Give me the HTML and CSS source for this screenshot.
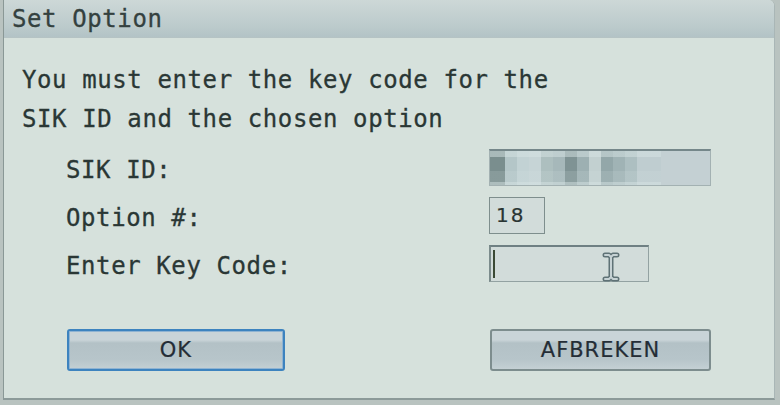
FILE: index.html
```html
<!DOCTYPE HTML>
<html>

<head>
  <meta charset="utf-8">
  <link rel="stylesheet" href="styles.css">
</head>

<body>

  <div class="dialog">
    <div class="titlebar">Set Option</div>

    <div class="content">
      <p class="msg">You must enter the key code for the<br>SIK ID and the chosen option</p>

      <div class="form">
        <span class="label">SIK ID:</span>
        <div class="field sik">
          <div class="masked">
            <span></span><span></span><span></span><span></span><span></span><span></span><span></span>
            <span></span><span></span><span></span><span></span><span></span><span></span>
          </div>
        </div>

        <span class="label">Option #:</span>
        <div class="field opt">18</div>

        <span class="label">Enter Key Code:</span>
        <div class="field key">
          <span class="caret"></span>
          <!-- mouse pointer hovering over the field -->
          <svg class="ibeam" width="20" height="30" viewBox="0 0 20 30">
            <path d="M4 3 H8 L10 5 L12 3 H16 M10 5 V25 M4 27 H8 L10 25 L12 27 H16" fill="none" stroke="#5f7276" stroke-width="5" stroke-linecap="round" stroke-linejoin="round" />
            <path d="M4 3 H8 L10 5 L12 3 H16 M10 5 V25 M4 27 H8 L10 25 L12 27 H16" fill="none" stroke="#c6d2d4" stroke-width="2" stroke-linecap="round" stroke-linejoin="round" />
          </svg>
        </div>
      </div>

      <div class="buttons">
        <button class="btn ok">OK</button>
        <button class="btn cancel">AFBREKEN</button>
      </div>
    </div>
  </div>

</body>
</html>
```

FILE: styles.css
```css
html, body {
  margin: 0;
  height: 100%;
}

body {
  background: #b9c3c0;
  overflow: hidden;
}

.dialog {
  width: 772px;
  height: 400px;
  margin-left: 3px;
  box-sizing: border-box;
  border-left: 1px solid #8a9896;
  border-right: 1px solid #a9b6b6;
  border-bottom: 2px solid #8c9a99;
  border-radius: 0 6px 0 0;
  background: #d6e1dc;
  color: #2a3735;
  font-family: "DejaVu Sans Mono", monospace;
  font-size: 24px;
  letter-spacing: 0.6px;
  -webkit-text-stroke: 0.3px #2a3735;
  display: flex;
  flex-direction: column;
  overflow: hidden;
}

.titlebar {
  height: 37px;
  line-height: 38px;
  padding-left: 8px;
  background: linear-gradient(#cdd8d7, #bccbcc 70%, #b3c3c6);
  border-bottom: 1px solid #b5c3c4;
  color: #34413f;
  -webkit-text-stroke: 0.3px #34413f;
}

.content {
  padding: 23px 0 0 18px;
}

.msg {
  margin: 0;
  line-height: 39px;
}

/* label column + field column */
.form {
  display: grid;
  grid-template-columns: 423px auto;
  row-gap: 11px;
  margin: 10px 0 0 44px;
  align-items: center;
}

.label {
  padding-top: 5px;
}

.field {
  height: 37px;
  box-sizing: border-box;
  position: relative;
  background: #d2dcda;
  border: 1.5px solid #7e8e8d;
}

.sik {
  width: 222px;
  border: 1px solid #a3b1b2;
  border-top: 2px solid #75878a;
  background: #c4d0d3;
}

.masked {
  display: flex;
  height: 100%;
  width: 171px;
  position: relative;
}

.masked span {
  width: 12px;
  height: 100%;
}

.masked span:nth-child(1) { width: 15px; background: #7a8e8e; }
.masked span:nth-child(2) { background: #b4c6c8; }
.masked span:nth-child(3) { background: #c2d2d4; }
.masked span:nth-child(4) { background: #c6d4d6; }
.masked span:nth-child(5) { background: #adbfbf; }
.masked span:nth-child(6) { background: #a6b8ba; }
.masked span:nth-child(7) { background: #7f9394; }
.masked span:nth-child(8) { background: #9db0b2; }
.masked span:nth-child(9) { background: #c2d0d0; }
.masked span:nth-child(10) { background: #93a7a9; }
.masked span:nth-child(11) { background: #a0b3b5; }
.masked span:nth-child(12) { background: #adbfc1; }
.masked span:nth-child(13) { width: 24px; background: #bfcdd0; }

.masked::after {
  content: "";
  position: absolute;
  inset: 0;
  background: linear-gradient(rgba(215, 228, 228, 0.5) 0 6px, transparent 6px 20px, rgba(215, 228, 228, 0.15) 20px 31px, rgba(215, 228, 228, 0.55) 31px);
}

.opt {
  width: 56px;
  font-family: "DejaVu Sans", sans-serif;
  font-size: 20px;
  letter-spacing: 2px;
  line-height: 34px;
  padding-left: 6px;
  color: #2a3533;
  -webkit-text-stroke: 0.2px #2a3533;
}

.key {
  width: 160px;
  border: 1px solid #93a2a2;
  border-top: 2px solid #6f8083;
  border-left: 2px solid #7c8c8c;
}

.caret {
  position: absolute;
  left: 2px;
  top: 3px;
  width: 2px;
  height: 28px;
  background: #3b4a35;
}

.ibeam {
  position: absolute;
  left: 110px;
  top: 5px;
}

.buttons {
  display: flex;
  gap: 205px;
  margin: 47px 0 0 45px;
}

.btn {
  width: 219px;
  height: 42px;
  padding: 0;
  box-sizing: border-box;
  border: 2px solid #7d8d8e;
  border-radius: 3px;
  background: linear-gradient(#c9d4d8 0 9px, #b3c1c6 12px, #b7c5ca 75%, #c4d0d4);
  font-family: "DejaVu Sans", sans-serif;
  font-size: 21px;
  letter-spacing: 1px;
  color: #242d36;
  -webkit-text-stroke: 0.2px #242d36;
}

.ok {
  width: 218px;
  border-color: #3d83bf;
  box-shadow: inset 0 0 0 1px #8fb3d2;
}

.cancel {
  width: 221px;
}
```
